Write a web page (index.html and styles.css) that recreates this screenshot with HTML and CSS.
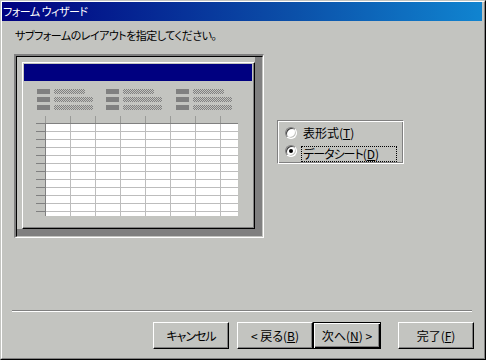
FILE: index.html
```html
<!DOCTYPE html>
<html lang="ja">
<head>
<meta charset="utf-8">
<title>フォーム ウィザード</title>
<link rel="stylesheet" href="styles.css">
</head>
<body>
<div class="window">
  <div class="frame">
    <div class="titlebar">フォーム ウィザード</div>
    <p class="instruction">サブフォームのレイアウトを指定してください。</p>
    <div class="middle">
      <div class="preview-frame">
        <div class="preview-inner">
          <div class="well">
            <div class="mini-window">
              <div class="mini-title"></div>
              <div class="fields">
                <div class="field-col">
                  <div class="field"><span class="lbl"></span><span class="val short"></span></div>
                  <div class="field"><span class="lbl"></span><span class="val"></span></div>
                  <div class="field"><span class="lbl"></span><span class="val"></span></div>
                </div>
                <div class="field-col">
                  <div class="field"><span class="lbl"></span><span class="val short"></span></div>
                  <div class="field"><span class="lbl"></span><span class="val"></span></div>
                  <div class="field"><span class="lbl"></span><span class="val"></span></div>
                </div>
                <div class="field-col">
                  <div class="field"><span class="lbl"></span><span class="val short"></span></div>
                  <div class="field"><span class="lbl"></span><span class="val"></span></div>
                  <div class="field"><span class="lbl"></span><span class="val"></span></div>
                </div>
              </div>
              <div class="sheet">
                <div class="sheet-head"></div>
                <div class="sheet-body">
                  <div class="selector"></div>
                  <div class="cells"></div>
                </div>
              </div>
            </div>
          </div>
        </div>
      </div>
      <div class="options">
        <div class="option">
          <span class="radio"></span>
          <span class="opt-label">表形式(<u>T</u>)</span>
        </div>
        <div class="option">
          <span class="radio checked"></span>
          <span class="opt-label focused"><span class="kana">データシート</span>(<u>D</u>)</span>
        </div>
      </div>
    </div>
    <div class="separator"></div>
    <div class="buttons">
      <button class="btn cancel"><span class="kana">キャンセル</span></button>
      <button class="btn back">&lt; 戻る(<u>B</u>)</button>
      <button class="btn next default">次へ(<u>N</u>) &gt;</button>
      <button class="btn finish">完了(<u>F</u>)</button>
    </div>
  </div>
</div>
</body>
</html>
```

FILE: styles.css
```css
* { box-sizing: border-box; }

html, body {
  margin: 0;
  padding: 0;
  background: #c3c4c0;
}

body {
  font-family: "Noto Sans CJK JP", "Noto Sans", sans-serif;
  font-size: 12px;
  font-feature-settings: "palt";
  color: #000;
}

.window {
  width: 486px;
  height: 360px;
  background: #c3c4c0;
  border: 1px solid;
  border-color: #c3c4c0 #000 #000 #c3c4c0;
}

.frame {
  height: 100%;
  border: 1px solid;
  border-color: #fff #808080 #808080 #fff;
  display: flex;
  flex-direction: column;
}

.titlebar {
  height: 19px;
  margin-right: 2px;
  padding-left: 1px;
  line-height: 19px;
  font-size: 11px;
  letter-spacing: -0.5px;
  color: #fff;
  background: linear-gradient(90deg, #000080 0%, #0b4fa8 60%, #1084d0 100%);
  white-space: nowrap;
}

.instruction {
  margin: 7px 0 0 13px;
  line-height: 14px;
  height: 14px;
  font-size: 11px;
  letter-spacing: -0.5px;
}

.kana { letter-spacing: -1px; }

.middle {
  display: flex;
  align-items: flex-start;
  margin: 12px 0 0 12px;
}

/* sunken preview frame */
.preview-frame {
  width: 250px;
  height: 184px;
  border-style: solid;
  border-width: 2px 1px 1px 2px;
  border-color: #808080 #fff #fff #808080;
}

.preview-inner {
  height: 100%;
  border-style: solid;
  border-width: 1px;
  border-color: #000 #c3c4c0 #c3c4c0 #000;
}

.well {
  height: 100%;
  padding: 5px 0 0 5px;
  border-style: solid;
  border-width: 0 7px 7px 0;
  border-color: #808080;
}

.mini-window {
  width: 233px;
  height: 167px;
  padding: 1px;
  border-style: solid;
  border-width: 1px;
  border-color: #fff #000 #000 #fff;
  box-shadow: inset -1px -1px #808080;
  display: flex;
  flex-direction: column;
}

.mini-title {
  height: 17px;
  margin-right: 1px;
  background: #000080;
}

.fields {
  display: grid;
  grid-template-columns: 69px 70px 60px;
  margin: 8px 0 0 13px;
}

.field-col {
  display: flex;
  flex-direction: column;
  gap: 3px;
}

.field {
  display: flex;
  gap: 4px;
  height: 5px;
}

.lbl {
  width: 13px;
  height: 5px;
  background: #808080;
}

.val {
  width: 39px;
  height: 5px;
  background: repeating-conic-gradient(#808080 0 25%, #c3c4c0 0 50%) 0 0 / 2px 2px;
}

.val.short { width: 31px; }

.sheet {
  width: 202px;
  height: 100px;
  margin: 6px 0 0 12px;
  display: flex;
  flex-direction: column;
}

.sheet-head {
  height: 8px;
  border-bottom: 1px solid #808080;
  background:
    repeating-linear-gradient(90deg, #9a9b98 0 1px, transparent 1px 25px) 9px 0 / 100% 100% no-repeat,
    #c3c4c0;
}

.sheet-body {
  flex: 1;
  display: flex;
}

.selector {
  width: 10px;
  border-right: 1px solid #808080;
  background:
    repeating-linear-gradient(180deg, transparent 0 7px, #808080 7px 8px),
    #c3c4c0;
}

.cells {
  flex: 1;
  background:
    repeating-linear-gradient(90deg, transparent 0 24px, #bdbdbd 24px 25px),
    repeating-linear-gradient(180deg, transparent 0 7px, #bdbdbd 7px 8px),
    #fff;
}

/* option group */
.options {
  width: 127px;
  height: 44px;
  margin: 66px 0 0 13px;
  padding: 3px 0 0 7px;
  border: 1px solid;
  border-color: #808080 #fff #fff #808080;
  box-shadow: inset 1px 1px #fff, inset -1px -1px #808080;
}

.option {
  display: flex;
  align-items: center;
  height: 18px;
  gap: 4px;
}

.radio {
  position: relative;
  flex: none;
  width: 12px;
  height: 12px;
  border-radius: 50%;
  background: #fff;
  border: 1px solid;
  border-color: #808080 #fff #fff #808080;
  box-shadow: inset 1px 1px #404040, inset -1px -1px #c3c4c0;
}

.radio.checked::after {
  content: "";
  position: absolute;
  left: 3px;
  top: 3px;
  width: 4px;
  height: 4px;
  border-radius: 50%;
  background: #000;
}

.opt-label {
  line-height: 14px;
  padding: 0 1px;
  border: 1px solid transparent;
  white-space: nowrap;
}

.opt-label.focused {
  width: 96px;
  border: 1px dotted #000;
  margin-top: 5px;
}

/* bottom */
.separator {
  margin: auto 0 0 10px;
  width: 460px;
  height: 2px;
  border-top: 1px solid #808080;
  border-bottom: 1px solid #fff;
}

.buttons {
  display: flex;
  height: 27px;
  margin: 10px 0 9px 151px;
}

.btn {
  height: 27px;
  width: 76px;
  padding: 0;
  font: inherit;
  font-feature-settings: "palt";
  color: #000;
  background: #c3c4c0;
  border: 1px solid;
  border-color: #fff #000 #000 #fff;
  box-shadow: inset -1px -1px #808080;
  white-space: nowrap;
}

.btn u { text-decoration-thickness: 1px; }

.cancel { margin-right: 8px; }

.next { width: 68px; margin-right: 17px; }

.btn.default {
  border-color: #000;
  box-shadow: inset 1px 1px #fff, inset -1px -1px #000, inset -2px -2px #808080;
}
```
